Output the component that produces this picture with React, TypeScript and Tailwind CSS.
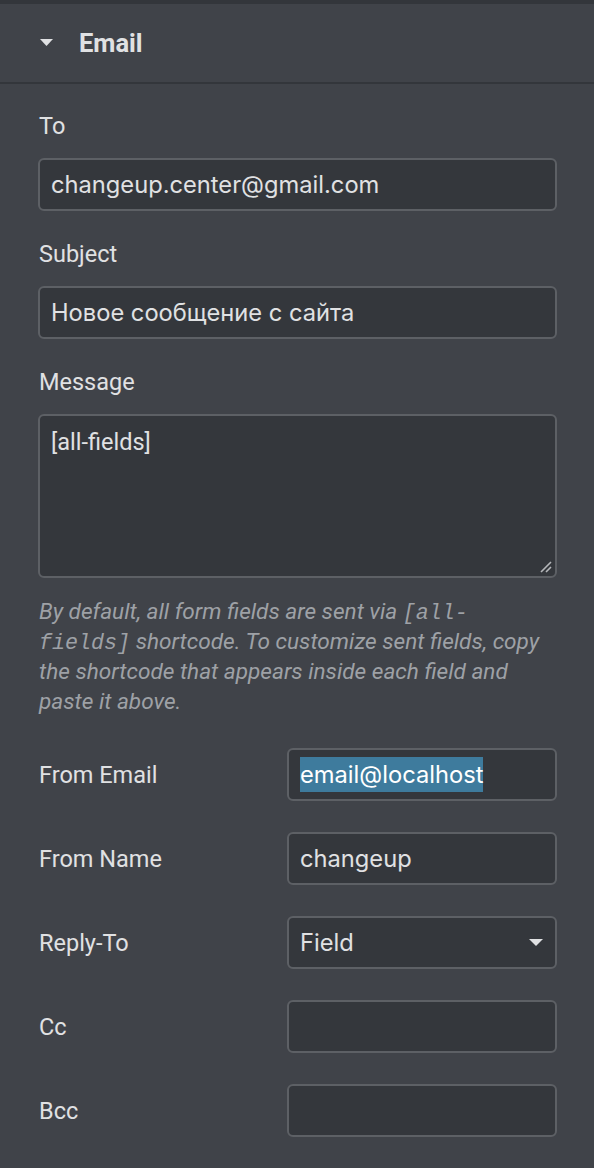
import React from "react";

const inputCls =
  "h-[53px] rounded-[6px] border-2 border-[#5d6065] bg-[#34373c] flex items-center px-[11px] text-[23.7px] text-[#e0e1e3] font-['Inter',sans-serif]";

const labelCls = "text-[23.5px] leading-[30px] text-[#e0e1e3] font-['Roboto',sans-serif] pl-[1px]";

function Row({ label, children }: { label: string; children?: React.ReactNode }) {
  return (
    <div className="flex items-center">
      <div className={"w-[249px] " + labelCls}>{label}</div>
      <div className={"flex-1 " + inputCls}>{children}</div>
    </div>
  );
}

export default function App() {
  return (
    <div className="w-[594px] h-[1168px] bg-[#404349] overflow-hidden font-['Roboto',sans-serif]">
      <div className="h-[4px] bg-[#33363b]" />
      <div className="h-[78px] flex items-center pl-[40px]">
        <svg width="13" height="8" viewBox="0 0 13 8" className="mr-[26px]">
          <path d="M0 0 L13 0 L6.5 7 Z" fill="#e0e1e3" />
        </svg>
        <span className="text-[25.5px] font-bold text-[#e0e1e3] font-['Roboto',sans-serif]">Email</span>
      </div>
      <div className="h-[2px] bg-[#33363b]" />
      <div className="pl-[38px] pr-[37px] pt-[27px]">
        <div className={labelCls}>To</div>
        <div className={"mt-[17px] " + inputCls}>changeup.center@gmail.com</div>
        <div className={"mt-[28px] " + labelCls}>Subject</div>
        <div className={"mt-[17px] " + inputCls}>Новое сообщение с сайта</div>
        <div className={"mt-[28px] " + labelCls}>Message</div>
        <div className="mt-[17px] relative h-[164px] rounded-[6px] border-2 border-[#5d6065] bg-[#34373c] px-[11px] pt-[9px] text-[23.5px] text-[#e0e1e3] font-['Roboto',sans-serif]">
          [all-fields]
          <svg width="14" height="14" viewBox="0 0 14 14" className="absolute right-[2px] bottom-[2px]">
            <path d="M2 12 L12 2 M7 12 L12 7" stroke="#b5b7ba" strokeWidth="1.6" />
          </svg>
        </div>
        <p className="mt-[19px] text-[22.6px] italic leading-[30px] text-[#9ea1a6] pl-[1px]">
          By default, all form fields are sent via{" "}
          <code className="font-['Liberation_Mono',monospace] italic text-[21.7px] leading-none">[all-fields]</code> shortcode. To
          customize sent fields, copy the shortcode that appears inside each field and paste it above.
        </p>
        <div className="mt-[31px] flex flex-col gap-[31px]">
          <Row label="From Email">
            <span className="bg-[#3e7b9d] text-white">email@localhost</span>
          </Row>
          <Row label="From Name">changeup</Row>
          <Row label="Reply-To">
            <span className="flex-1">Field</span>
            <svg width="14" height="8" viewBox="0 0 14 8" className="mr-[1px]">
              <path d="M0 0 L14 0 L7 7 Z" fill="#e0e1e3" />
            </svg>
          </Row>
          <Row label="Cc" />
          <Row label="Bcc" />
        </div>
      </div>
    </div>
  );
}
